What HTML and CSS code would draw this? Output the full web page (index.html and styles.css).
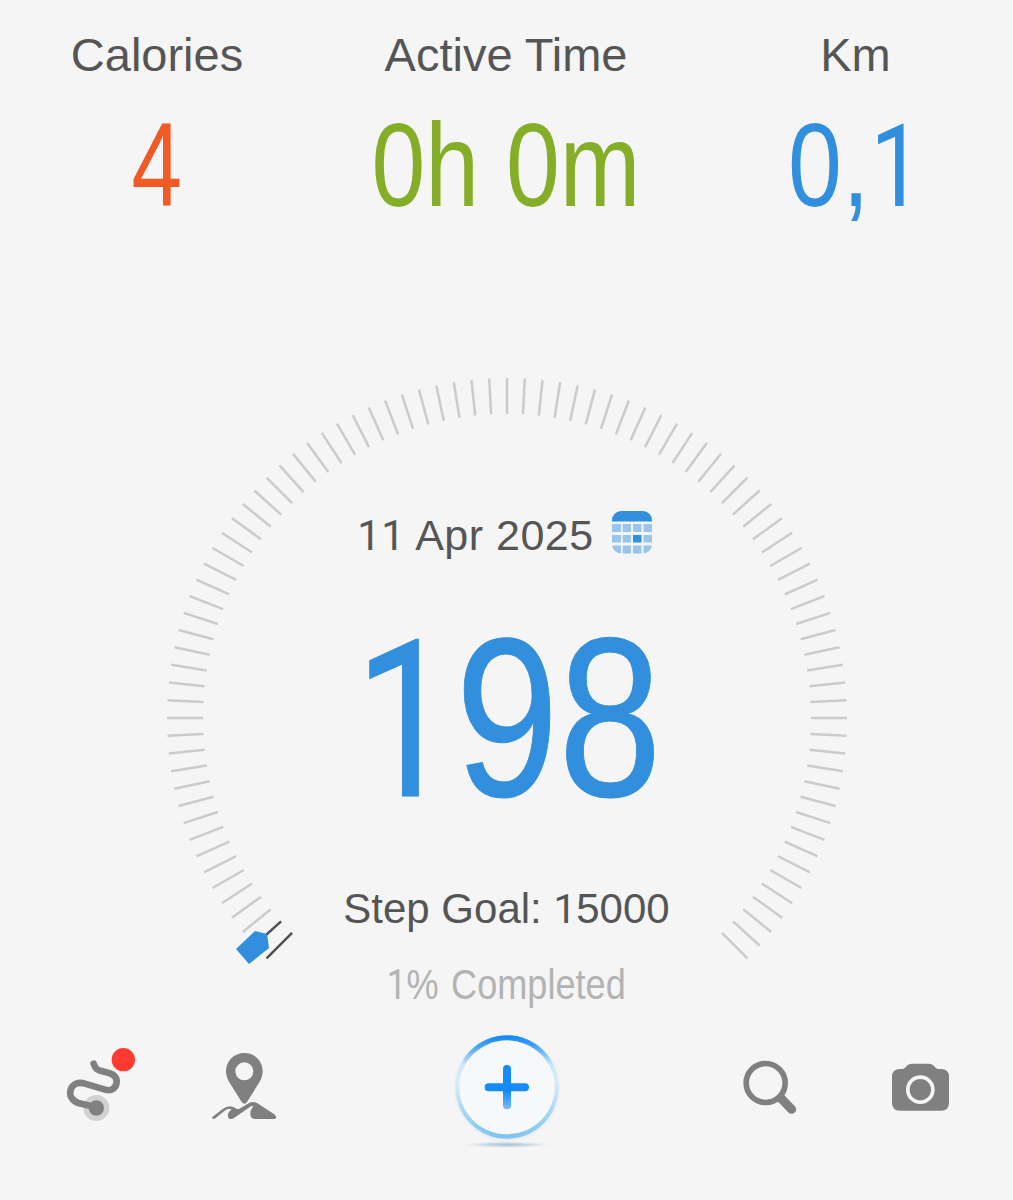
FILE: index.html
```html
<!DOCTYPE html>
<html lang="en">

<head>
    <meta charset="UTF-8">
    <meta name="viewport" content="width=device-width, initial-scale=1.0">
    <title>Step Tracker</title>
    <link rel="stylesheet" href="styles.css">
</head>

<body>
    <header class="stats">
        <div class="stat">
            <span class="label">Calories</span>
            <span class="value calories">4</span>
        </div>
        <div class="stat">
            <span class="label">Active Time</span>
            <span class="value time">0h 0m</span>
        </div>
        <div class="stat">
            <span class="label">Km</span>
            <span class="value distance">0,<span class="one">1</span></span>
        </div>
    </header>

    <main class="gauge">
        <svg class="dial" viewBox="-350 -348 700 600">
            <g id="ticks"></g>
            <path class="pointer" d="M-271 231L-252 213L-240 216L-238 230L-258 246Z" />
        </svg>
        <div class="info">
            <div class="date">
                <span><span class="one">1</span><span class="one">1</span> Apr 2025</span>
                <svg class="calendar" viewBox="0 0 40 43">
                    <clipPath id="cal"><rect width="40" height="42.500" rx="9" /></clipPath>
                    <g clip-path="url(#cal)">
                        <path fill="#318fde" d="M0 0H40V10.500H0Z" />
                        <path fill="#98c4ed" d="M0 13h9v8H0zM10.700 13h8.300v8h-8.300zM21 13h8.500v8H21zM31.500 13H40v8h-8.500zM0 24h9v7.500H0zM10.700 24h8.300v7.500h-8.300zM31.500 24H40v7.500h-8.500zM0 34.500h9V43H0zM10.700 34.500h8.300V43h-8.300zM21 34.500h8.500V43H21zM31.500 34.500H40V43h-8.500z" />
                        <path fill="#318fde" d="M21 24h8.500v7.500H21z" />
                    </g>
                </svg>
            </div>
            <div class="steps"><span class="one">1</span>98</div>
            <div class="goal">Step Goal: <span class="one">1</span>5000</div>
            <div class="completed"><span class="one">1</span>% Completed</div>
        </div>
    </main>

    <nav class="toolbar">
        <svg class="icon" viewBox="3 0 300 330">
            <circle cx="139" cy="234" r="39" fill="#d2d2d2" />
            <path fill="none" stroke="#808080" stroke-width="20" stroke-linecap="round" d="M131 101C136 117 143 120 154 123L177 129C196 134 203 148 199 162C195 177 182 184 165 179L105 161C84 154 67 163 62 179C57 196 66 213 85 219L125 229" />
            <circle cx="139" cy="234" r="23" fill="#808080" />
            <circle cx="220" cy="89" r="35" fill="#ff3b30" />
        </svg>
        <svg class="icon" viewBox="432 0 300 330">
            <path fill="#808080" fill-rule="evenodd" d="M583 69C552 69 528 93 528 124C528 136 532 147 538 157L575 216Q583 226 591 216L628 157C634 147 638 136 638 124C638 93 614 69 583 69ZM583 97A27 27 0 1 1 583 151A27 27 0 1 1 583 97Z" />
            <path fill="#808080" d="M488 260L518 237Q538 222 556 234Q561 239 568 236L597 219Q609 212 622 220L672 252Q681 259 678 264Q676 267 671 267H612Q600 264 601 250Q602 238 610 229L604 228L552 264Q545 269 538 266Q532 262 534 253Q537 244 545 238Q536 233 526 241L496 265Q489 269 487 265Q486 262 488 260Z" />
        </svg>
        <svg class="add" viewBox="6 0 450 420">
            <defs>
                <linearGradient id="ring" x1="0" y1="0" x2="0" y2="1">
                    <stop offset="0" stop-color="#0f86fa" />
                    <stop offset=".1" stop-color="#429ff8" />
                    <stop offset=".28" stop-color="#cce6fa" />
                    <stop offset=".45" stop-color="#d9edf8" />
                    <stop offset="1" stop-color="#7fc3ef" />
                </linearGradient>
                <linearGradient id="plus" x1="0" y1="0" x2="0" y2="1">
                    <stop offset=".6" stop-color="#158bfc" />
                    <stop offset="1" stop-color="#7abef9" />
                </linearGradient>
                <radialGradient id="shadow">
                    <stop offset="0" stop-color="#a3c0d6" />
                    <stop offset=".5" stop-color="#c6d6e2" stop-opacity=".8" />
                    <stop offset="1" stop-color="#f5f5f5" stop-opacity="0" />
                </radialGradient>
                <radialGradient id="glow">
                    <stop offset=".88" stop-color="#a9cfea" stop-opacity=".5" />
                    <stop offset="1" stop-color="#f5f5f5" stop-opacity="0" />
                </radialGradient>
            </defs>
            <ellipse cx="231" cy="374" rx="145" ry="11" fill="url(#shadow)" />
            <circle cx="231" cy="205" r="166" fill="url(#glow)" />
            <circle cx="231" cy="201" r="155" fill="url(#ring)" />
            <ellipse cx="231" cy="202" rx="143" ry="141" fill="#f7f8f9" />
            <path fill="url(#plus)" d="M219 147a12 12 0 0 1 24 0V190H285a12 12 0 0 1 0 24H243V256a12 12 0 0 1 -24 0V214H176a12 12 0 0 1 0 -24H219Z" />
        </svg>
        <svg class="icon" viewBox="0 0 300 330">
            <circle cx="137" cy="159" r="58.500" fill="none" stroke="#808080" stroke-width="17" />
            <path stroke="#808080" stroke-width="27" stroke-linecap="round" d="M184 206L215 238" />
        </svg>
        <svg class="icon" viewBox="450 0 300 330">
            <path fill="#808080" d="M516 141Q516 117 540 117H545Q551 117 555 113L562 106Q567 101 575 101H627Q635 101 640 106L647 113Q651 117 657 117H663Q687 117 687 141V218Q687 242 663 242H540Q516 242 516 218Z" />
            <circle cx="601" cy="179" r="37.500" fill="none" stroke="#f5f5f5" stroke-width="11" />
        </svg>
    </nav>

    <script>
        // one tick every 3 degrees, the first ones are the completed part
        const ticks = document.querySelector('#ticks');
        const done = 2;

        for (let i = 0; i <= 90; i++) {
            const tick = document.createElementNS('http://www.w3.org/2000/svg', 'line');
            tick.setAttribute('y1', -304);
            tick.setAttribute('y2', -340);
            tick.setAttribute('transform', `rotate(${i * 3 - 135})`);
            tick.setAttribute('class', i < done ? 'tick done' : 'tick');
            ticks.appendChild(tick);
        }
    </script>
</body>

</html>
```
FILE: styles.css
```css
body {
    margin: 0;
    background: #f5f5f5;
    color: #555;
    font-family: "Liberation Sans", Arial, sans-serif;
}

.stats {
    display: grid;
    grid-template-columns: 314px 1fr 315px;
    box-sizing: border-box;
    height: 370px;
    padding-top: 27px;
}

.stat {
    display: flex;
    flex-direction: column;
    align-items: center;
}

.label {
    font-size: 47px;
    line-height: 56px;
}

.value {
    margin-top: 22px;
    font-size: 118px;
    line-height: 120px;
    white-space: nowrap;
    transform: scaleX(.82);
}

.calories {
    color: #f15a24;
    transform: scaleX(.77);
}

.time {
    color: #84ae28;
}

.distance {
    color: #318fde;
    letter-spacing: 1px;
}

/* plain figure one, without a foot */
.one {
    font-family: Roboto, sans-serif;
    font-size: .967em;
    line-height: 0;
}

.gauge {
    display: grid;
    justify-items: center;
    height: 650px;
}

.dial {
    grid-area: 1 / 1;
    width: 700px;
    height: 600px;
    margin-left: 1px;
}

.tick {
    stroke: #cbcbcb;
    stroke-width: 2.5;
}

.tick.done {
    stroke: #505050;
}

.pointer {
    fill: #318fde;
}

.info {
    grid-area: 1 / 1;
    display: flex;
    flex-direction: column;
    align-items: center;
    padding-top: 135px;
    white-space: nowrap;
}

.date {
    display: flex;
    align-items: center;
    gap: 18px;
    margin-right: 4px;
    font-size: 43px;
    line-height: 60px;
    letter-spacing: .5px;
}

.calendar {
    width: 40px;
    height: 43px;
    margin-bottom: 5px;
}

.steps {
    margin: 38px 0 0 3px;
    font-size: 226px;
    line-height: 230px;
    color: #318fde;
    -webkit-text-stroke: 1px #318fde;
    transform: scaleX(.82);
}

.goal {
    margin-top: 48px;
    font-size: 42px;
    line-height: 56px;
}

.completed {
    margin-top: 19px;
    font-size: 43px;
    line-height: 56px;
    word-spacing: 3px;
    color: #b3b3b3;
    transform: scaleX(.84);
}

.toolbar {
    display: grid;
    grid-template-columns: 142px 144px 382px 144px 156px;
    justify-items: center;
    height: 180px;
    padding: 0 15px 0 30px;
}

.icon {
    width: 100px;
    height: 110px;
    margin-top: 10px;
}

.add {
    width: 150px;
    height: 140px;
}
```
